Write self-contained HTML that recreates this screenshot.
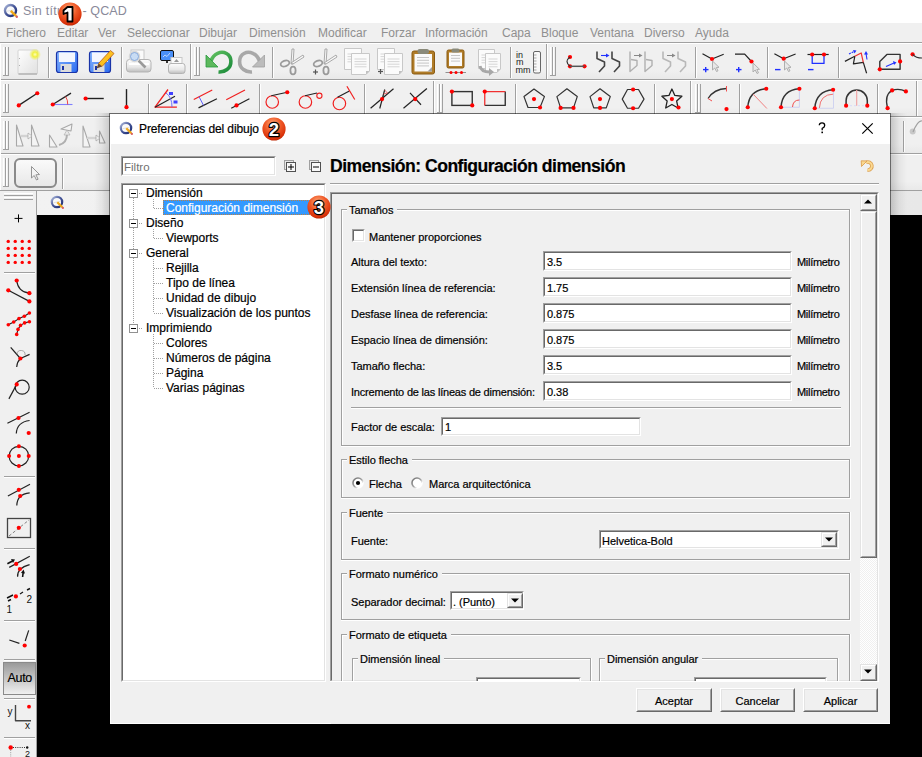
<!DOCTYPE html>
<html><head><meta charset="utf-8"><style>
html,body{margin:0;padding:0;width:922px;height:757px;overflow:hidden;background:#000;position:relative}
.t{position:absolute;white-space:nowrap;font-family:"Liberation Sans",sans-serif}
.d{letter-spacing:-0.03px}
.t{-webkit-text-stroke:0.2px currentColor}
</style></head><body>
<div style="position:absolute;left:0px;top:0px;width:922px;height:23px;background:#fff"></div>
<svg style="position:absolute;left:2.5px;top:3px" width="17" height="17" viewBox="0 0 17 17"><defs><linearGradient id="qg" x1="0" y1="0" x2="1" y2="1"><stop offset="0" stop-color="#b0bcdc"/><stop offset="0.45" stop-color="#4a5a9c"/><stop offset="1" stop-color="#1a2a70"/></linearGradient></defs><circle cx="7.5" cy="7.5" r="5.55" fill="#fafafa" stroke="url(#qg)" stroke-width="2.4"/><line x1="3.75" y1="8.25" x2="11.25" y2="6.75" stroke="#d0d0d0" stroke-width="0.6"/><line x1="7.800000000000001" y1="7.800000000000001" x2="13.2" y2="13.2" stroke="#f0a818" stroke-width="2.4"/><circle cx="13.8" cy="13.8" r="1.2" fill="#d86060"/></svg>
<div class="t" style="left:23px;top:5.42px;font-size:12.5px;line-height:12.5px;color:#8a8a9a;font-weight:normal;letter-spacing:0.3px;-webkit-text-stroke:0">Sin título</div>
<div class="t" style="left:82.5px;top:5.42px;font-size:12.5px;line-height:12.5px;color:#8a8a9a;font-weight:normal;letter-spacing:0.1px;-webkit-text-stroke:0">- QCAD</div>
<div style="position:absolute;left:0px;top:23px;width:922px;height:19px;background:#f0f0f0"></div>
<div style="position:absolute;left:0px;top:42px;width:922px;height:1px;background:#a0a0a0"></div>
<div style="position:absolute;left:0px;top:43px;width:922px;height:1px;background:#fff"></div>
<div class="t" style="left:6px;top:27.04px;font-size:12px;line-height:12px;color:#8f8f8f;font-weight:normal;width:42px;-webkit-text-stroke:0">Fichero</div>
<div class="t" style="left:57px;top:27.04px;font-size:12px;line-height:12px;color:#8f8f8f;font-weight:normal;width:34px;-webkit-text-stroke:0">Editar</div>
<div class="t" style="left:98px;top:27.04px;font-size:12px;line-height:12px;color:#8f8f8f;font-weight:normal;width:21px;-webkit-text-stroke:0">Ver</div>
<div class="t" style="left:127px;top:27.04px;font-size:12px;line-height:12px;color:#8f8f8f;font-weight:normal;width:64px;-webkit-text-stroke:0">Seleccionar</div>
<div class="t" style="left:199px;top:27.04px;font-size:12px;line-height:12px;color:#8f8f8f;font-weight:normal;width:42px;-webkit-text-stroke:0">Dibujar</div>
<div class="t" style="left:249px;top:27.04px;font-size:12px;line-height:12px;color:#8f8f8f;font-weight:normal;width:60px;-webkit-text-stroke:0">Dimensión</div>
<div class="t" style="left:318px;top:27.04px;font-size:12px;line-height:12px;color:#8f8f8f;font-weight:normal;width:55px;-webkit-text-stroke:0">Modificar</div>
<div class="t" style="left:381px;top:27.04px;font-size:12px;line-height:12px;color:#8f8f8f;font-weight:normal;width:36px;-webkit-text-stroke:0">Forzar</div>
<div class="t" style="left:425px;top:27.04px;font-size:12px;line-height:12px;color:#8f8f8f;font-weight:normal;width:68px;-webkit-text-stroke:0">Información</div>
<div class="t" style="left:502px;top:27.04px;font-size:12px;line-height:12px;color:#8f8f8f;font-weight:normal;width:31px;-webkit-text-stroke:0">Capa</div>
<div class="t" style="left:541px;top:27.04px;font-size:12px;line-height:12px;color:#8f8f8f;font-weight:normal;width:41px;-webkit-text-stroke:0">Bloque</div>
<div class="t" style="left:590px;top:27.04px;font-size:12px;line-height:12px;color:#8f8f8f;font-weight:normal;width:45px;-webkit-text-stroke:0">Ventana</div>
<div class="t" style="left:644px;top:27.04px;font-size:12px;line-height:12px;color:#8f8f8f;font-weight:normal;width:42px;-webkit-text-stroke:0">Diverso</div>
<div class="t" style="left:695px;top:27.04px;font-size:12px;line-height:12px;color:#8f8f8f;font-weight:normal;width:37px;-webkit-text-stroke:0">Ayuda</div>
<div style="position:absolute;left:0px;top:44px;width:922px;height:35px;background:linear-gradient(#f0f0f0 0%,#f0f0f0 75%,#e9e9e9 100%)"></div>
<div style="position:absolute;left:0px;top:79px;width:922px;height:1px;background:#a0a0a0"></div>
<div style="position:absolute;left:0px;top:80px;width:922px;height:1px;background:#fff"></div>
<div style="position:absolute;left:0px;top:81px;width:922px;height:35px;background:linear-gradient(#f0f0f0 0%,#f0f0f0 75%,#e9e9e9 100%)"></div>
<div style="position:absolute;left:0px;top:116px;width:922px;height:1px;background:#a0a0a0"></div>
<div style="position:absolute;left:0px;top:117px;width:922px;height:1px;background:#fff"></div>
<div style="position:absolute;left:0px;top:118px;width:922px;height:35px;background:linear-gradient(#f0f0f0 0%,#f0f0f0 75%,#e9e9e9 100%)"></div>
<div style="position:absolute;left:0px;top:153px;width:922px;height:1px;background:#a0a0a0"></div>
<div style="position:absolute;left:0px;top:154px;width:922px;height:1px;background:#fff"></div>
<div style="position:absolute;left:0px;top:155px;width:922px;height:35px;background:linear-gradient(#f0f0f0 0%,#f0f0f0 75%,#e9e9e9 100%)"></div>
<div style="position:absolute;left:0px;top:190px;width:922px;height:1px;background:#a0a0a0"></div>
<div style="position:absolute;left:0px;top:191px;width:922px;height:1px;background:#fff"></div>
<div style="position:absolute;left:0px;top:44px;width:1px;height:146px;background:#fff"></div>
<div style="position:absolute;left:3px;top:47px;width:2px;height:28px;border-left:1px solid #fff;border-right:1px solid #a0a0a0;width:1px;box-sizing:content-box"></div>
<div style="position:absolute;left:6px;top:47px;width:2px;height:28px;border-left:1px solid #fff;border-right:1px solid #a0a0a0;width:1px;box-sizing:content-box"></div>
<div style="position:absolute;left:3px;top:75px;width:6px;height:1px;background:#a0a0a0"></div>
<div style="position:absolute;left:48px;top:47px;width:1px;height:31px;background:#a0a0a0"></div>
<div style="position:absolute;left:49px;top:47px;width:1px;height:31px;background:#fff"></div>
<div style="position:absolute;left:121px;top:47px;width:1px;height:31px;background:#a0a0a0"></div>
<div style="position:absolute;left:122px;top:47px;width:1px;height:31px;background:#fff"></div>
<div style="position:absolute;left:190px;top:44px;width:1px;height:35px;background:#a0a0a0"></div>
<div style="position:absolute;left:191px;top:44px;width:1px;height:35px;background:#fff"></div>
<div style="position:absolute;left:194px;top:47px;width:2px;height:28px;border-left:1px solid #fff;border-right:1px solid #a0a0a0;width:1px;box-sizing:content-box"></div>
<div style="position:absolute;left:197px;top:47px;width:2px;height:28px;border-left:1px solid #fff;border-right:1px solid #a0a0a0;width:1px;box-sizing:content-box"></div>
<div style="position:absolute;left:194px;top:75px;width:6px;height:1px;background:#a0a0a0"></div>
<div style="position:absolute;left:272px;top:47px;width:1px;height:31px;background:#a0a0a0"></div>
<div style="position:absolute;left:273px;top:47px;width:1px;height:31px;background:#fff"></div>
<div style="position:absolute;left:510px;top:47px;width:1px;height:31px;background:#a0a0a0"></div>
<div style="position:absolute;left:511px;top:47px;width:1px;height:31px;background:#fff"></div>
<div style="position:absolute;left:546px;top:44px;width:1px;height:35px;background:#a0a0a0"></div>
<div style="position:absolute;left:547px;top:44px;width:1px;height:35px;background:#fff"></div>
<div style="position:absolute;left:550px;top:47px;width:2px;height:28px;border-left:1px solid #fff;border-right:1px solid #a0a0a0;width:1px;box-sizing:content-box"></div>
<div style="position:absolute;left:553px;top:47px;width:2px;height:28px;border-left:1px solid #fff;border-right:1px solid #a0a0a0;width:1px;box-sizing:content-box"></div>
<div style="position:absolute;left:550px;top:75px;width:6px;height:1px;background:#a0a0a0"></div>
<div style="position:absolute;left:695px;top:47px;width:1px;height:31px;background:#a0a0a0"></div>
<div style="position:absolute;left:696px;top:47px;width:1px;height:31px;background:#fff"></div>
<div style="position:absolute;left:767px;top:47px;width:1px;height:31px;background:#a0a0a0"></div>
<div style="position:absolute;left:768px;top:47px;width:1px;height:31px;background:#fff"></div>
<div style="position:absolute;left:838px;top:47px;width:1px;height:31px;background:#a0a0a0"></div>
<div style="position:absolute;left:839px;top:47px;width:1px;height:31px;background:#fff"></div>
<div style="position:absolute;left:3px;top:84px;width:2px;height:28px;border-left:1px solid #fff;border-right:1px solid #a0a0a0;width:1px;box-sizing:content-box"></div>
<div style="position:absolute;left:6px;top:84px;width:2px;height:28px;border-left:1px solid #fff;border-right:1px solid #a0a0a0;width:1px;box-sizing:content-box"></div>
<div style="position:absolute;left:3px;top:112px;width:6px;height:1px;background:#a0a0a0"></div>
<div style="position:absolute;left:148px;top:84px;width:1px;height:31px;background:#a0a0a0"></div>
<div style="position:absolute;left:149px;top:84px;width:1px;height:31px;background:#fff"></div>
<div style="position:absolute;left:186px;top:84px;width:1px;height:31px;background:#a0a0a0"></div>
<div style="position:absolute;left:187px;top:84px;width:1px;height:31px;background:#fff"></div>
<div style="position:absolute;left:259px;top:84px;width:1px;height:31px;background:#a0a0a0"></div>
<div style="position:absolute;left:260px;top:84px;width:1px;height:31px;background:#fff"></div>
<div style="position:absolute;left:364px;top:84px;width:1px;height:31px;background:#a0a0a0"></div>
<div style="position:absolute;left:365px;top:84px;width:1px;height:31px;background:#fff"></div>
<div style="position:absolute;left:433px;top:81px;width:1px;height:35px;background:#a0a0a0"></div>
<div style="position:absolute;left:434px;top:81px;width:1px;height:35px;background:#fff"></div>
<div style="position:absolute;left:437px;top:84px;width:2px;height:28px;border-left:1px solid #fff;border-right:1px solid #a0a0a0;width:1px;box-sizing:content-box"></div>
<div style="position:absolute;left:440px;top:84px;width:2px;height:28px;border-left:1px solid #fff;border-right:1px solid #a0a0a0;width:1px;box-sizing:content-box"></div>
<div style="position:absolute;left:437px;top:112px;width:6px;height:1px;background:#a0a0a0"></div>
<div style="position:absolute;left:515px;top:84px;width:1px;height:31px;background:#a0a0a0"></div>
<div style="position:absolute;left:516px;top:84px;width:1px;height:31px;background:#fff"></div>
<div style="position:absolute;left:654px;top:84px;width:1px;height:31px;background:#a0a0a0"></div>
<div style="position:absolute;left:655px;top:84px;width:1px;height:31px;background:#fff"></div>
<div style="position:absolute;left:690px;top:81px;width:1px;height:35px;background:#a0a0a0"></div>
<div style="position:absolute;left:691px;top:81px;width:1px;height:35px;background:#fff"></div>
<div style="position:absolute;left:695px;top:84px;width:2px;height:28px;border-left:1px solid #fff;border-right:1px solid #a0a0a0;width:1px;box-sizing:content-box"></div>
<div style="position:absolute;left:698px;top:84px;width:2px;height:28px;border-left:1px solid #fff;border-right:1px solid #a0a0a0;width:1px;box-sizing:content-box"></div>
<div style="position:absolute;left:695px;top:112px;width:6px;height:1px;background:#a0a0a0"></div>
<div style="position:absolute;left:739px;top:84px;width:1px;height:31px;background:#a0a0a0"></div>
<div style="position:absolute;left:740px;top:84px;width:1px;height:31px;background:#fff"></div>
<div style="position:absolute;left:877px;top:84px;width:1px;height:31px;background:#a0a0a0"></div>
<div style="position:absolute;left:878px;top:84px;width:1px;height:31px;background:#fff"></div>
<div style="position:absolute;left:916px;top:81px;width:1px;height:35px;background:#a0a0a0"></div>
<div style="position:absolute;left:917px;top:81px;width:1px;height:35px;background:#fff"></div>
<div style="position:absolute;left:3px;top:121px;width:2px;height:28px;border-left:1px solid #fff;border-right:1px solid #a0a0a0;width:1px;box-sizing:content-box"></div>
<div style="position:absolute;left:6px;top:121px;width:2px;height:28px;border-left:1px solid #fff;border-right:1px solid #a0a0a0;width:1px;box-sizing:content-box"></div>
<div style="position:absolute;left:3px;top:149px;width:6px;height:1px;background:#a0a0a0"></div>
<div style="position:absolute;left:903px;top:121px;width:1px;height:31px;background:#a0a0a0"></div>
<div style="position:absolute;left:904px;top:121px;width:1px;height:31px;background:#fff"></div>
<div style="position:absolute;left:3px;top:158px;width:2px;height:28px;border-left:1px solid #fff;border-right:1px solid #a0a0a0;width:1px;box-sizing:content-box"></div>
<div style="position:absolute;left:6px;top:158px;width:2px;height:28px;border-left:1px solid #fff;border-right:1px solid #a0a0a0;width:1px;box-sizing:content-box"></div>
<div style="position:absolute;left:3px;top:186px;width:6px;height:1px;background:#a0a0a0"></div>
<div style="position:absolute;left:14px;top:158px;width:43px;height:30px;border:2px solid #8a8a8a;border-radius:6px;box-sizing:border-box;background:linear-gradient(#fafafa,#e8e8e8)"></div>
<div style="position:absolute;left:62px;top:158px;width:1px;height:31px;background:#a0a0a0"></div>
<div style="position:absolute;left:63px;top:158px;width:1px;height:31px;background:#fff"></div>
<div style="position:absolute;left:0px;top:191px;width:37px;height:566px;background:#f0f0f0"></div>
<div style="position:absolute;left:36px;top:191px;width:1px;height:566px;background:#a0a0a0"></div>
<div style="position:absolute;left:4px;top:193px;width:29px;height:1px;border-top:1px solid #fff;border-bottom:1px solid #a0a0a0;height:1px;box-sizing:content-box"></div>
<div style="position:absolute;left:4px;top:197px;width:29px;height:1px;border-top:1px solid #fff;border-bottom:1px solid #a0a0a0;height:1px;box-sizing:content-box"></div>
<div style="position:absolute;left:4px;top:272px;width:31px;height:1px;background:#a0a0a0"></div>
<div style="position:absolute;left:4px;top:273px;width:31px;height:1px;background:#fff"></div>
<div style="position:absolute;left:4px;top:476px;width:31px;height:1px;background:#a0a0a0"></div>
<div style="position:absolute;left:4px;top:477px;width:31px;height:1px;background:#fff"></div>
<div style="position:absolute;left:4px;top:548px;width:31px;height:1px;background:#a0a0a0"></div>
<div style="position:absolute;left:4px;top:549px;width:31px;height:1px;background:#fff"></div>
<div style="position:absolute;left:4px;top:620px;width:31px;height:1px;background:#a0a0a0"></div>
<div style="position:absolute;left:4px;top:621px;width:31px;height:1px;background:#fff"></div>
<div style="position:absolute;left:4px;top:659px;width:31px;height:1px;background:#a0a0a0"></div>
<div style="position:absolute;left:4px;top:660px;width:31px;height:1px;background:#fff"></div>
<div style="position:absolute;left:4px;top:698px;width:31px;height:1px;background:#a0a0a0"></div>
<div style="position:absolute;left:4px;top:699px;width:31px;height:1px;background:#fff"></div>
<div style="position:absolute;left:4px;top:737px;width:31px;height:1px;background:#a0a0a0"></div>
<div style="position:absolute;left:4px;top:738px;width:31px;height:1px;background:#fff"></div>
<svg style="position:absolute;left:0;top:0" width="922" height="757" viewBox="0 0 922 757"><defs><linearGradient id="pg" x1="0" y1="0" x2="1" y2="1"><stop offset="0" stop-color="#fff"/><stop offset="1" stop-color="#e0e0e0"/></linearGradient><radialGradient id="glow"><stop offset="0" stop-color="#ffffc0"/><stop offset="0.4" stop-color="#f0f040"/><stop offset="1" stop-color="#f0f040" stop-opacity="0"/></radialGradient><linearGradient id="flop" x1="0" y1="0" x2="1" y2="1"><stop offset="0" stop-color="#8ab8ff"/><stop offset="1" stop-color="#2a6af0"/></linearGradient><linearGradient id="prn" x1="0" y1="0" x2="0" y2="1"><stop offset="0" stop-color="#fdfdfd"/><stop offset="0.6" stop-color="#e8e8e8"/><stop offset="1" stop-color="#bcbcbc"/></linearGradient><linearGradient id="grn" x1="0" y1="0" x2="1" y2="1"><stop offset="0" stop-color="#60c060"/><stop offset="1" stop-color="#1a8a3a"/></linearGradient></defs><rect x="18" y="50" width="19.5" height="24" fill="url(#pg)" stroke="#d4d4d4" stroke-width="1" rx="1"/><line x1="18.5" y1="74" x2="37" y2="74" stroke="#a8a8a8" stroke-width="1.2" /><circle cx="19.5" cy="58.5" r="0.5" fill="#999"/><circle cx="19.5" cy="65.5" r="0.5" fill="#999"/><circle cx="35" cy="54.5" r="6" fill="url(#glow)"/><rect x="56.5" y="51.5" width="21" height="21" rx="2.5" fill="url(#flop)" stroke="#1a34a8" stroke-width="1.2"/><rect x="59" y="52.5" width="16" height="9.5" fill="#f4f6fe"/><rect x="60.5" y="64" width="11" height="8" fill="#dcdcdc"/><rect x="62" y="66" width="2" height="4" fill="#1a34a8"/><rect x="89.5" y="51.5" width="21" height="21" rx="2.5" fill="url(#flop)" stroke="#1a34a8" stroke-width="1.2"/><rect x="92" y="52.5" width="16" height="9.5" fill="#f4f6fe"/><rect x="93.5" y="64" width="11" height="8" fill="#dcdcdc"/><rect x="95" y="66" width="2" height="4" fill="#1a34a8"/><path d="M98.5 63.5 L110.5 50.5 L114 53.5 L102 66.5 Z" fill="#fcc020" stroke="#b85a10" stroke-width="0.8" /><path d="M98.5 63.5 L102 66.5 L96.5 68.5 Z" fill="#6a4a30"/><rect x="131" y="50" width="13" height="10" fill="#fafafa" stroke="#c8c8c8"/><rect x="126.5" y="59.5" width="24.5" height="12.5" rx="3" fill="url(#prn)" stroke="#b4b4b4"/><rect x="129" y="63" width="20" height="2" fill="#fff"/><line x1="138.5" y1="60.5" x2="145.5" y2="67.5" stroke="#9a9a9a" stroke-width="2.6" /><circle cx="134.5" cy="56.5" r="5" fill="#c8dcf4" stroke="#d8d8d8" stroke-width="1.6"/><circle cx="134.5" cy="56.5" r="4" fill="none" stroke="#7aa0d8" stroke-width="0.8"/><rect x="160.5" y="50.5" width="13" height="10" rx="1.5" fill="#4a90f8" stroke="#111"/><polyline points="163,57 165,55 167,56.5 170,53" fill="none" stroke="#e8f0ff" stroke-width="0.7" stroke-linejoin="round" /><line x1="167" y1="61" x2="167" y2="63" stroke="#333" stroke-width="2" /><rect x="171" y="57.5" width="11" height="8" fill="#fafafa" stroke="#c8c8c8"/><rect x="168.5" y="63.5" width="16.5" height="10" rx="2.5" fill="url(#prn)" stroke="#b4b4b4"/><path d="M176.5 59 L179 62 L174 62Z" fill="#999"/><path d="M211 61 C213.5 53.5 221 50.5 226.5 53.5 C232 56.5 232.5 65.5 227 69.5 C224.5 71.5 221 72.2 218.5 72" fill="none" stroke="url(#grn)" stroke-width="3.6" /><path d="M206 55 L206 67 L218 67 Z" fill="#5cb85c" stroke="#2a9a40" stroke-width="0.8"/><path d="M259.5 61 C257 53.5 249.5 50.5 244 53.5 C238.5 56.5 238 65.5 243.5 69.5 C246 71.5 249.5 72.2 252 72" fill="none" stroke="#a8a8a8" stroke-width="3.6" /><path d="M264.5 55 L264.5 67 L252.5 67 Z" fill="#bcbcbc" stroke="#a0a0a0" stroke-width="0.8"/><path d="M291 64 L292 49 L294 49 L293 64Z" fill="#f8f8f8" stroke="#a0a0a0" stroke-width="0.9"/><path d="M291 63 L303 55 L304 57 L293 64Z" fill="#f8f8f8" stroke="#a0a0a0" stroke-width="0.9"/><ellipse cx="285" cy="63.5" rx="4.5" ry="2.8" fill="none" stroke="#9a9a9a" stroke-width="1.8" transform="rotate(-20 285 63.5)"/><ellipse cx="293" cy="70.5" rx="2.6" ry="3.8" fill="none" stroke="#9a9a9a" stroke-width="1.8"/><path d="M324 64 L325 49 L327 49 L326 64Z" fill="#f8f8f8" stroke="#a0a0a0" stroke-width="0.9"/><path d="M324 63 L336 55 L337 57 L326 64Z" fill="#f8f8f8" stroke="#a0a0a0" stroke-width="0.9"/><ellipse cx="318" cy="63.5" rx="4.5" ry="2.8" fill="none" stroke="#9a9a9a" stroke-width="1.8" transform="rotate(-20 318 63.5)"/><ellipse cx="326" cy="70.5" rx="2.6" ry="3.8" fill="none" stroke="#9a9a9a" stroke-width="1.8"/><line x1="313" y1="72" x2="318" y2="72" stroke="#555" stroke-width="1.2" /><line x1="315.5" y1="69.5" x2="315.5" y2="74.5" stroke="#555" stroke-width="1.2" /><path d="M344.5 48.5 H361.5 V66 L358 69.5 H344.5Z" fill="#fbfbfb" stroke="#c8c8c8"/><path d="M361.5 66 L358 66 L358 69.5Z" fill="#c0c0c0"/><line x1="347.5" y1="54.0" x2="358.5" y2="54.0" stroke="#d0d0d0" stroke-width="0.9" /><line x1="347.5" y1="56.6" x2="358.5" y2="56.6" stroke="#d0d0d0" stroke-width="0.9" /><line x1="347.5" y1="59.2" x2="358.5" y2="59.2" stroke="#d0d0d0" stroke-width="0.9" /><line x1="347.5" y1="61.8" x2="358.5" y2="61.8" stroke="#d0d0d0" stroke-width="0.9" /><path d="M351.5 53.5 H369.5 V71 L366 74.5 H351.5Z" fill="#fbfbfb" stroke="#c8c8c8"/><path d="M369.5 71 L366 71 L366 74.5Z" fill="#c0c0c0"/><line x1="354.5" y1="59.0" x2="366.5" y2="59.0" stroke="#d0d0d0" stroke-width="0.9" /><line x1="354.5" y1="61.6" x2="366.5" y2="61.6" stroke="#d0d0d0" stroke-width="0.9" /><line x1="354.5" y1="64.2" x2="366.5" y2="64.2" stroke="#d0d0d0" stroke-width="0.9" /><line x1="354.5" y1="66.8" x2="366.5" y2="66.8" stroke="#d0d0d0" stroke-width="0.9" /><path d="M377.5 48.5 H394.5 V66 L391 69.5 H377.5Z" fill="#fbfbfb" stroke="#c8c8c8"/><path d="M394.5 66 L391 66 L391 69.5Z" fill="#c0c0c0"/><line x1="380.5" y1="54.0" x2="391.5" y2="54.0" stroke="#d0d0d0" stroke-width="0.9" /><line x1="380.5" y1="56.6" x2="391.5" y2="56.6" stroke="#d0d0d0" stroke-width="0.9" /><line x1="380.5" y1="59.2" x2="391.5" y2="59.2" stroke="#d0d0d0" stroke-width="0.9" /><line x1="380.5" y1="61.8" x2="391.5" y2="61.8" stroke="#d0d0d0" stroke-width="0.9" /><path d="M384.5 53.5 H402.5 V71 L399 74.5 H384.5Z" fill="#fbfbfb" stroke="#c8c8c8"/><path d="M402.5 71 L399 71 L399 74.5Z" fill="#c0c0c0"/><line x1="387.5" y1="59.0" x2="399.5" y2="59.0" stroke="#d0d0d0" stroke-width="0.9" /><line x1="387.5" y1="61.6" x2="399.5" y2="61.6" stroke="#d0d0d0" stroke-width="0.9" /><line x1="387.5" y1="64.2" x2="399.5" y2="64.2" stroke="#d0d0d0" stroke-width="0.9" /><line x1="387.5" y1="66.8" x2="399.5" y2="66.8" stroke="#d0d0d0" stroke-width="0.9" /><line x1="378" y1="71.5" x2="383" y2="71.5" stroke="#555" stroke-width="1.2" /><line x1="380.5" y1="69" x2="380.5" y2="74" stroke="#555" stroke-width="1.2" /><rect x="412" y="51" width="22.5" height="23" rx="2" fill="#b07c28" stroke="#8a5a10"/><rect x="414.5" y="54" width="17.5" height="17.5" fill="#fafafa"/><line x1="417" y1="57.5" x2="429" y2="57.5" stroke="#c0c0c0" stroke-width="0.9" /><line x1="417" y1="60.3" x2="429" y2="60.3" stroke="#c0c0c0" stroke-width="0.9" /><line x1="417" y1="63.1" x2="429" y2="63.1" stroke="#c0c0c0" stroke-width="0.9" /><line x1="417" y1="65.9" x2="429" y2="65.9" stroke="#c0c0c0" stroke-width="0.9" /><path d="M432 67 L432 71.5 L427.5 71.5Z" fill="#a0a0a0"/><rect x="417.5" y="49" width="11.5" height="5" rx="2" fill="#8a8a7a"/><rect x="447" y="50" width="17" height="18" rx="1.5" fill="#b07c28" stroke="#8a5a10"/><rect x="449" y="52.5" width="13" height="13.5" fill="#fafafa"/><line x1="451" y1="55.5" x2="460" y2="55.5" stroke="#c0c0c0" stroke-width="0.9" /><line x1="451" y1="58.3" x2="460" y2="58.3" stroke="#c0c0c0" stroke-width="0.9" /><line x1="451" y1="61.1" x2="460" y2="61.1" stroke="#c0c0c0" stroke-width="0.9" /><rect x="451.5" y="48.5" width="8" height="4" rx="1.5" fill="#8a8a7a"/><line x1="445.5" y1="72.5" x2="466" y2="72.5" stroke="#777" stroke-width="0.8" /><circle cx="451" cy="72.5" r="1.5" fill="#f00"/><circle cx="456" cy="72.5" r="1.5" fill="#f00"/><circle cx="461.5" cy="72.5" r="1.5" fill="#f00"/><path d="M478.5 49.5 H494.5 V65 L491 68.5 H478.5Z" fill="#fbfbfb" stroke="#c8c8c8"/><path d="M494.5 65 L491 65 L491 68.5Z" fill="#c0c0c0"/><line x1="481.5" y1="55.0" x2="491.5" y2="55.0" stroke="#d0d0d0" stroke-width="0.9" /><line x1="481.5" y1="57.6" x2="491.5" y2="57.6" stroke="#d0d0d0" stroke-width="0.9" /><line x1="481.5" y1="60.2" x2="491.5" y2="60.2" stroke="#d0d0d0" stroke-width="0.9" /><line x1="481.5" y1="62.8" x2="491.5" y2="62.8" stroke="#d0d0d0" stroke-width="0.9" /><path d="M485.5 53.5 H500.5 V69 L497 72.5 H485.5Z" fill="#fbfbfb" stroke="#c8c8c8"/><path d="M500.5 69 L497 69 L497 72.5Z" fill="#c0c0c0"/><line x1="488.5" y1="59.0" x2="497.5" y2="59.0" stroke="#d0d0d0" stroke-width="0.9" /><line x1="488.5" y1="61.6" x2="497.5" y2="61.6" stroke="#d0d0d0" stroke-width="0.9" /><line x1="488.5" y1="64.2" x2="497.5" y2="64.2" stroke="#d0d0d0" stroke-width="0.9" /><line x1="488.5" y1="66.8" x2="497.5" y2="66.8" stroke="#d0d0d0" stroke-width="0.9" /><path d="M480 66 Q481 72 490 72" fill="none" stroke="#a8a8a8" stroke-width="3" /><path d="M489 68 L494 72 L489 76Z" fill="#a8a8a8"/><g style="-webkit-text-stroke:0.35px #222"><text x="516" y="57.5" font-family="Liberation Sans" font-size="9" fill="#222" font-weight="normal" text-anchor="start">in</text><text x="516" y="65.3" font-family="Liberation Sans" font-size="9" fill="#222" font-weight="normal" text-anchor="start">m</text><text x="515.5" y="73.3" font-family="Liberation Sans" font-size="9" fill="#222" font-weight="normal" text-anchor="start">mm</text></g><rect x="533.5" y="51.5" width="7" height="21.5" rx="1.5" fill="#f8f8f8" stroke="#666"/><line x1="534" y1="55" x2="536.5" y2="55" stroke="#888" stroke-width="0.7" /><line x1="534" y1="58" x2="536.5" y2="58" stroke="#888" stroke-width="0.7" /><line x1="534" y1="61" x2="536.5" y2="61" stroke="#888" stroke-width="0.7" /><line x1="534" y1="64" x2="536.5" y2="64" stroke="#888" stroke-width="0.7" /><line x1="534" y1="67" x2="536.5" y2="67" stroke="#888" stroke-width="0.7" /><line x1="534" y1="70" x2="536.5" y2="70" stroke="#888" stroke-width="0.7" /><circle cx="570" cy="57" r="2.1" fill="#f00"/><circle cx="570" cy="66.3" r="2.1" fill="#f00"/><circle cx="584.5" cy="66.3" r="2.1" fill="#f00"/><line x1="570" y1="66.3" x2="584.5" y2="66.3" stroke="#555" stroke-width="1.5" /><path d="M570 57 Q564 61.5 570 66.3" fill="none" stroke="#333" stroke-width="1.2" /><polyline points="597,51.5 597,58.5 604.5,62.0 604.5,66.0 599,72.0" fill="none" stroke="#444" stroke-width="1.6" stroke-linejoin="round" /><polyline points="612,51.5 612,58.5 619.5,62.0 619.5,66.0 614,72.0" fill="none" stroke="#444" stroke-width="1.6" stroke-linejoin="round" /><line x1="601" y1="55.5" x2="607" y2="55.5" stroke="#2030ff" stroke-width="1.1" /><path d="M606 53.5 L609.5 55.5 L606 57.5Z" fill="#2030ff"/><polyline points="630,51.5 630,71.5 637,65.5 637,60.5 631,59.5" fill="none" stroke="#b0b0b0" stroke-width="1.4" stroke-linejoin="round" /><polyline points="645,51.5 645,71.5 652,65.5 652,60.5 646,59.5" fill="none" stroke="#b0b0b0" stroke-width="1.4" stroke-linejoin="round" /><line x1="634" y1="55.5" x2="640" y2="55.5" stroke="#888" stroke-width="1" /><path d="M639 53.5 L642.5 55.5 L639 57.5Z" fill="#888"/><polyline points="663,51.5 663,58.5 670.5,62.0 670.5,66.0 665,72.0" fill="none" stroke="#b8b8b8" stroke-width="1.6" stroke-linejoin="round" /><polyline points="678,51.5 678,58.5 685.5,62.0 685.5,66.0 680,72.0" fill="none" stroke="#b8b8b8" stroke-width="1.6" stroke-linejoin="round" /><line x1="667" y1="55.5" x2="673" y2="55.5" stroke="#888" stroke-width="1" /><path d="M672 53.5 L675.5 55.5 L672 57.5Z" fill="#888"/><polyline points="702.5,53.7 712,59 723.7,54.2" fill="none" stroke="#222" stroke-width="1.2" stroke-linejoin="round" /><circle cx="712" cy="59" r="2.1" fill="#f00"/><path d="M712.5 61 L712.5 70 L714.7 68 L716.5 71.5 L718.0 70.8 L716.3 67.5 L719.0 67.3Z" fill="#e8e8e8" stroke="#a8a8a8" stroke-width="0.9"/><line x1="703" y1="69.6" x2="708.5" y2="69.6" stroke="#2030ff" stroke-width="1.4" /><line x1="705.7" y1="67" x2="705.7" y2="72.3" stroke="#2030ff" stroke-width="1.4" /><polyline points="735,54.2 744.7,54.2 751.5,61.5" fill="none" stroke="#222" stroke-width="1.2" stroke-linejoin="round" /><circle cx="751.5" cy="61.5" r="2.1" fill="#f00"/><path d="M753 63 L753 72 L755.2 70 L757 73.5 L758.5 72.8 L756.8 69.5 L759.5 69.3Z" fill="#e8e8e8" stroke="#a8a8a8" stroke-width="0.9"/><line x1="736" y1="69.6" x2="741.5" y2="69.6" stroke="#2030ff" stroke-width="1.4" /><line x1="738.7" y1="67" x2="738.7" y2="72.3" stroke="#2030ff" stroke-width="1.4" /><polyline points="774.4,53.7 783.7,58.7 795.6,54" fill="none" stroke="#222" stroke-width="1.2" stroke-linejoin="round" /><circle cx="783.7" cy="58.7" r="2.1" fill="#f00"/><path d="M784.5 61 L784.5 70 L786.7 68 L788.5 71.5 L790.0 70.8 L788.3 67.5 L791.0 67.3Z" fill="#e8e8e8" stroke="#a8a8a8" stroke-width="0.9"/><line x1="775" y1="69.6" x2="780.5" y2="69.6" stroke="#2030ff" stroke-width="1.4" /><line x1="807.5" y1="54.5" x2="828.7" y2="54.5" stroke="#222" stroke-width="1.2" /><polyline points="812.2,54.5 812.2,63.4 824,63.4 824,54.5" fill="none" stroke="#2030ff" stroke-width="1.3" stroke-linejoin="round" /><circle cx="812.2" cy="54.5" r="2.1" fill="#f00"/><circle cx="824" cy="54.5" r="2.1" fill="#f00"/><line x1="808" y1="69.6" x2="813.5" y2="69.6" stroke="#2030ff" stroke-width="1.4" /><line x1="844.9" y1="61.4" x2="854.8" y2="56.3" stroke="#222" stroke-width="1.2" /><polyline points="854.8,56.3 853.4,63.8 863.3,62.4 866.6,73.2" fill="none" stroke="#222" stroke-width="1.2" stroke-linejoin="round" /><polyline points="854.8,56.3 861.2,53 863.3,62.4" fill="none" stroke="#f03030" stroke-width="1.2" stroke-linejoin="round" /><line x1="849" y1="54" x2="854" y2="51.5" stroke="#2030ff" stroke-width="1.1" stroke-dasharray="2 1"/><path d="M853 50 L856.5 50.5 L854.5 53.5Z" fill="#2030ff"/><line x1="867" y1="59.5" x2="866" y2="53.5" stroke="#2030ff" stroke-width="1.1" /><path d="M864 54.5 L866 51 L868 54.5Z" fill="#2030ff"/><polygon points="879.8,69.3 879.8,61.4 886.9,54.4 900.1,54.4 900.1,69.3" fill="none" stroke="#333" stroke-width="1.4" stroke-linejoin="round" /><circle cx="879.8" cy="69.3" r="2.1" fill="#f00"/><circle cx="900.1" cy="61.4" r="2.1" fill="#f00"/><line x1="886" y1="66.5" x2="894" y2="63" stroke="#2030ff" stroke-width="1.1" /><path d="M893 61 L896.5 62.5 L894 65Z" fill="#2030ff"/><circle cx="912.6" cy="54.3" r="2.1" fill="#f00"/><path d="M912.6 54.3 Q916 58 922 58" fill="none" stroke="#333" stroke-width="1.2" /><line x1="18.75" y1="105.4" x2="37.25" y2="93.25" stroke="#222" stroke-width="1.3" /><circle cx="18.75" cy="105.4" r="2.1" fill="#f00"/><circle cx="37.25" cy="93.25" r="2.1" fill="#f00"/><line x1="52.75" y1="104.5" x2="71" y2="93.1" stroke="#222" stroke-width="1.3" /><line x1="52.75" y1="104.5" x2="72.5" y2="104.5" stroke="#8080ff" stroke-width="1.1" /><path d="M65.6 96.6 Q68 100 67.7 104.5" fill="none" stroke="#f03030" stroke-width="0.9" /><circle cx="52.75" cy="104.5" r="2.1" fill="#f00"/><line x1="85.6" y1="98.5" x2="103.75" y2="98.5" stroke="#222" stroke-width="1.4" /><circle cx="85.6" cy="98.5" r="2.1" fill="#f00"/><line x1="126.5" y1="89.1" x2="126.5" y2="107.2" stroke="#222" stroke-width="1.4" /><circle cx="126.5" cy="107.2" r="2.1" fill="#f00"/><polyline points="168,89.5 155,107.2 176.9,107.2" fill="none" stroke="#f02020" stroke-width="1.3" stroke-linejoin="round" /><line x1="155" y1="107.2" x2="175" y2="96.25" stroke="#222" stroke-width="1.2" /><path d="M166 93 Q172 97 172 107" fill="none" stroke="#6060ff" stroke-width="0.9" /><rect x="169" y="92" width="4" height="3" fill="#4040ff"/><rect x="173.5" y="100.5" width="4" height="3" fill="#4040ff"/><line x1="193.75" y1="99.5" x2="212.25" y2="90" stroke="#f02020" stroke-width="1.2" /><line x1="198.5" y1="107.9" x2="216.9" y2="98.75" stroke="#222" stroke-width="1.2" /><line x1="199" y1="96.6" x2="203.5" y2="105.4" stroke="#6060ff" stroke-width="1" /><line x1="226.25" y1="99.75" x2="245" y2="90" stroke="#f02020" stroke-width="1.2" /><line x1="231.25" y1="108.25" x2="249.4" y2="98.75" stroke="#222" stroke-width="1.2" /><circle cx="236.5" cy="105.4" r="2.1" fill="#f00"/><circle cx="272.25" cy="102" r="6.25" fill="none" stroke="#f02020" stroke-width="1.2"/><line x1="271.25" y1="95.75" x2="287.25" y2="92.25" stroke="#222" stroke-width="1.2" /><circle cx="287.25" cy="92.25" r="2.1" fill="#f00"/><circle cx="305.4" cy="102" r="6.25" fill="none" stroke="#f02020" stroke-width="1.2"/><circle cx="319.4" cy="95.75" r="2.6" fill="none" stroke="#f02020" stroke-width="1.1"/><line x1="305" y1="95.75" x2="317" y2="93" stroke="#222" stroke-width="1.2" /><circle cx="339.4" cy="103.5" r="6.25" fill="none" stroke="#f02020" stroke-width="1.2"/><line x1="337.5" y1="97.25" x2="349.4" y2="91" stroke="#222" stroke-width="1.2" /><line x1="346.9" y1="86.25" x2="354.75" y2="99.5" stroke="#f02020" stroke-width="1.2" /><line x1="370.6" y1="108.25" x2="393.5" y2="88.75" stroke="#222" stroke-width="1.2" /><line x1="379.75" y1="108.5" x2="384.75" y2="89.5" stroke="#222" stroke-width="1.2" /><polyline points="384.5,90 387.5,93 383.5,94" fill="none" stroke="#f05050" stroke-width="0.8" stroke-linejoin="round" /><circle cx="382.1" cy="99.1" r="2.1" fill="#f00"/><line x1="403.5" y1="108.25" x2="426.9" y2="88.5" stroke="#222" stroke-width="1.2" /><line x1="410" y1="92.9" x2="421" y2="104.75" stroke="#222" stroke-width="1.2" /><circle cx="415.25" cy="99.1" r="2.1" fill="#f00"/><rect x="451.9" y="91.6" width="20.35" height="13.8" fill="none" stroke="#333" stroke-width="1.4"/><circle cx="451.9" cy="91.6" r="2.1" fill="#f00"/><circle cx="472.25" cy="105.4" r="2.1" fill="#f00"/><polyline points="484.75,105.4 505.25,105.4 505.25,91.6" fill="none" stroke="#333" stroke-width="1.4" stroke-linejoin="round" /><polyline points="484.75,105.4 484.75,91.6 505.25,91.6" fill="none" stroke="#f03030" stroke-width="1.3" stroke-linejoin="round" /><circle cx="484.75" cy="91.6" r="2.1" fill="#f00"/><polygon points="534,89.1 544.4,96.6 540,107.5 528,107.5 524,96.6" fill="none" stroke="#333" stroke-width="1.2" stroke-linejoin="round" /><circle cx="534" cy="99.1" r="2.1" fill="#f00"/><circle cx="540" cy="107.5" r="2.1" fill="#f00"/><polygon points="566.9,88.75 577.25,96.6 573.5,107.9 560.6,107.9 556.9,96.6" fill="none" stroke="#333" stroke-width="1.2" stroke-linejoin="round" /><circle cx="560.6" cy="107.9" r="2.1" fill="#f00"/><circle cx="573.5" cy="107.9" r="2.1" fill="#f00"/><polygon points="600,88.75 610.25,96.6 606.25,107.9 593.75,107.9 590,96.6" fill="none" stroke="#333" stroke-width="1.2" stroke-linejoin="round" /><circle cx="600" cy="99.1" r="2.1" fill="#f00"/><circle cx="600" cy="107.9" r="2.1" fill="#f00"/><polygon points="627.5,89.5 638.5,89.5 644,99.1 638.5,108.25 627.5,108.25 622.25,99.1" fill="none" stroke="#333" stroke-width="1.2" stroke-linejoin="round" /><circle cx="633.1" cy="89.5" r="2.1" fill="#f00"/><circle cx="633.1" cy="108.25" r="2.1" fill="#f00"/><polygon points="671.9,89.0 674.84,95.45 681.89,96.26 676.66,101.05 678.07,107.99 671.9,104.5 665.73,107.99 667.14,101.05 661.91,96.26 668.96,95.45" fill="none" stroke="#222" stroke-width="1.3" stroke-linejoin="round" /><circle cx="671.9" cy="99.1" r="2.1" fill="#f00"/><circle cx="678.5" cy="107.5" r="2.1" fill="#f00"/><path d="M708 98.5 Q714 89 726.5 88.5" fill="none" stroke="#333" stroke-width="1.3" /><line x1="708" y1="98.5" x2="712" y2="101" stroke="#f05050" stroke-width="1" /><line x1="726.5" y1="86" x2="726.5" y2="91.5" stroke="#f05050" stroke-width="1" /><circle cx="726.5" cy="109.1" r="2.1" fill="#f00"/><path d="M747.75 107.25 Q749 90 766.25 88.75" fill="none" stroke="#333" stroke-width="1.5" /><line x1="753.1" y1="94.1" x2="766.9" y2="108.5" stroke="#f08080" stroke-width="1" /><circle cx="747.75" cy="107.25" r="2.1" fill="#f00"/><circle cx="766.25" cy="88.75" r="2.1" fill="#f00"/><path d="M781 107.25 Q782 90 799.4 88.75" fill="none" stroke="#333" stroke-width="1.5" /><polyline points="781,107.25 799.4,107.25 799.4,90" fill="none" stroke="#c8ccf0" stroke-width="0.9" stroke-linejoin="round" /><path d="M792.5 107 Q793 100 799.4 100" fill="none" stroke="#f05050" stroke-width="1" /><circle cx="781" cy="107.25" r="2.1" fill="#f00"/><circle cx="799.4" cy="88.75" r="2.1" fill="#f00"/><path d="M814.75 108.25 Q816 91 833.1 89.75" fill="none" stroke="#333" stroke-width="1.5" /><path d="M819.4 108 Q820 94.5 833.5 94.1" fill="none" stroke="#f07070" stroke-width="1" /><polyline points="814.75,108.25 833.5,108.25 833.5,91" fill="none" stroke="#c8ccf0" stroke-width="0.8" stroke-linejoin="round" /><circle cx="814.75" cy="108.25" r="2.1" fill="#f00"/><circle cx="833.1" cy="89.75" r="2.1" fill="#f00"/><path d="M846.1 105.7 L846.1 100.6 A10.6 10.6 0 0 1 867.3 100.6 L867.3 105.7" fill="none" stroke="#333" stroke-width="1.5" /><line x1="856.7" y1="90" x2="856.7" y2="105.7" stroke="#f0a0a0" stroke-width="1.1" /><line x1="846" y1="105.7" x2="867" y2="105.7" stroke="#d0d4f8" stroke-width="0.8" stroke-dasharray="2 2"/><circle cx="846.1" cy="105.7" r="2.1" fill="#f00"/><circle cx="867.3" cy="105.7" r="2.1" fill="#f00"/><path d="M887.6 108.2 Q884 95 892.1 90.4 Q899 88 905.9 91.4" fill="none" stroke="#333" stroke-width="1.3" /><circle cx="892.1" cy="90.4" r="2.1" fill="#f00"/><circle cx="905.9" cy="91.4" r="2.1" fill="#f00"/><circle cx="887.6" cy="108.2" r="2.1" fill="#f00"/><polygon points="16.5,125 23,146 16.5,146" fill="#f4f4f4" stroke="#a8a8a8" stroke-width="1.1" stroke-linejoin="round" /><polygon points="31.5,125 39,146 31.5,146" fill="#f4f4f4" stroke="#a8a8a8" stroke-width="1.1" stroke-linejoin="round" /><line x1="21" y1="136" x2="29" y2="136" stroke="#b8b8b8" stroke-width="2.2" /><line x1="21" y1="136" x2="29" y2="136" stroke="#f4f4f4" stroke-width="0.9" /><path d="M28 133 L32 136 L28 139Z" fill="#f4f4f4" stroke="#a8a8a8" stroke-width="0.7"/><polygon points="49.5,135 57,147 49.5,147" fill="#f4f4f4" stroke="#a8a8a8" stroke-width="1.1" stroke-linejoin="round" /><polygon points="61,129 72,124 71,131" fill="#f4f4f4" stroke="#a8a8a8" stroke-width="1.1" stroke-linejoin="round" /><path d="M59 145 Q67 143 67 134" fill="none" stroke="#b0b0b0" stroke-width="2" /><path d="M64 135 L67 130 L70 135Z" fill="#e8e8e8" stroke="#a8a8a8" stroke-width="0.6"/><polygon points="83,126 90,147 83,147" fill="#f4f4f4" stroke="#a8a8a8" stroke-width="1.1" stroke-linejoin="round" /><polygon points="99.5,131 105,143 99.5,143" fill="#f4f4f4" stroke="#a8a8a8" stroke-width="1.1" stroke-linejoin="round" /><line x1="87" y1="138" x2="97" y2="138" stroke="#b8b8b8" stroke-width="2.2" /><line x1="87" y1="138" x2="97" y2="138" stroke="#f4f4f4" stroke-width="0.9" /><path d="M96 135 L100 138 L96 141Z" fill="#f4f4f4" stroke="#a8a8a8" stroke-width="0.7"/><circle cx="912.7" cy="131.6" r="3" fill="#c8c8c8"/><path d="M913 132 Q918 120 922 121" fill="none" stroke="#a0a0a0" stroke-width="1.2" /><path d="M31.5 166.5 L31.5 178 L34.2 175.5 L36.5 180 L38.1 179.2 L35.9 174.8 L39.5 174.5Z" fill="#f4f4f4" stroke="#8a8a8a" stroke-width="0.9"/><line x1="14.5" y1="218.4" x2="22.5" y2="218.4" stroke="#000" stroke-width="1" /><line x1="18.5" y1="214.4" x2="18.5" y2="222.4" stroke="#000" stroke-width="1" /><circle cx="8.25" cy="241.4" r="1.7" fill="#f00"/><circle cx="8.25" cy="248.4" r="1.7" fill="#f00"/><circle cx="8.25" cy="255.4" r="1.7" fill="#f00"/><circle cx="8.25" cy="262.4" r="1.7" fill="#f00"/><circle cx="15.25" cy="241.4" r="1.7" fill="#f00"/><circle cx="15.25" cy="248.4" r="1.7" fill="#f00"/><circle cx="15.25" cy="255.4" r="1.7" fill="#f00"/><circle cx="15.25" cy="262.4" r="1.7" fill="#f00"/><circle cx="22.25" cy="241.4" r="1.7" fill="#f00"/><circle cx="22.25" cy="248.4" r="1.7" fill="#f00"/><circle cx="22.25" cy="255.4" r="1.7" fill="#f00"/><circle cx="22.25" cy="262.4" r="1.7" fill="#f00"/><circle cx="29.25" cy="241.4" r="1.7" fill="#f00"/><circle cx="29.25" cy="248.4" r="1.7" fill="#f00"/><circle cx="29.25" cy="255.4" r="1.7" fill="#f00"/><circle cx="29.25" cy="262.4" r="1.7" fill="#f00"/><line x1="8.3" y1="290.3" x2="29.4" y2="301.4" stroke="#222" stroke-width="1.2" /><path d="M16.7 280.5 Q18 292 29.4 293.2" fill="none" stroke="#222" stroke-width="1.2" /><circle cx="16.7" cy="280.5" r="2.1" fill="#f00"/><circle cx="8.3" cy="290.3" r="2.1" fill="#f00"/><circle cx="29.4" cy="293.2" r="2.1" fill="#f00"/><circle cx="29.4" cy="301.4" r="2.1" fill="#f00"/><polyline points="8.3,324.8 13.7,322 19,318.6 24.3,316.2 29.4,313" fill="none" stroke="#222" stroke-width="1.1" stroke-linejoin="round" /><polyline points="16.7,334.4 18,329.4 20.5,325.4 24.6,322.9 29.4,321.7" fill="none" stroke="#222" stroke-width="1.1" stroke-linejoin="round" /><circle cx="8.3" cy="324.8" r="1.8" fill="#f00"/><circle cx="13.7" cy="322" r="1.8" fill="#f00"/><circle cx="19" cy="318.6" r="1.8" fill="#f00"/><circle cx="24.3" cy="316.2" r="1.8" fill="#f00"/><circle cx="29.4" cy="313" r="1.8" fill="#f00"/><circle cx="16.7" cy="334.4" r="1.8" fill="#f00"/><circle cx="18" cy="329.4" r="1.8" fill="#f00"/><circle cx="20.5" cy="325.4" r="1.8" fill="#f00"/><circle cx="24.6" cy="322.9" r="1.8" fill="#f00"/><circle cx="29.4" cy="321.7" r="1.8" fill="#f00"/><line x1="10.7" y1="347.4" x2="20.4" y2="358.5" stroke="#222" stroke-width="1.2" /><line x1="29.6" y1="354.4" x2="20.4" y2="358.5" stroke="#222" stroke-width="1.2" /><path d="M20.4 358.5 Q17 362 16.7 367" fill="none" stroke="#222" stroke-width="1.2" /><path d="M17 354 A4 4 0 0 1 25 355" fill="none" stroke="#888" stroke-width="0.7" /><circle cx="20.4" cy="358.5" r="2.1" fill="#f00"/><circle cx="22.2" cy="387.2" r="7" fill="none" stroke="#222" stroke-width="1.2"/><line x1="16.7" y1="384.4" x2="8.9" y2="398.9" stroke="#222" stroke-width="1.2" /><circle cx="16.7" cy="384.4" r="2.1" fill="#f00"/><line x1="7.4" y1="423.3" x2="29.6" y2="412.2" stroke="#222" stroke-width="1.2" /><circle cx="18.5" cy="418" r="2.1" fill="#f00"/><path d="M16.3 433.5 Q17 422 29.6 420.5" fill="none" stroke="#222" stroke-width="1.2" /><circle cx="28.7" cy="433" r="2.1" fill="#f00"/><circle cx="18.9" cy="456.1" r="9.8" fill="none" stroke="#222" stroke-width="1.2"/><circle cx="18.9" cy="456.1" r="2" fill="#f00"/><circle cx="18.9" cy="446.3" r="2" fill="#f00"/><circle cx="18.9" cy="465.9" r="2" fill="#f00"/><circle cx="9.1" cy="456.1" r="2" fill="#f00"/><circle cx="28.7" cy="456.1" r="2" fill="#f00"/><line x1="7.9" y1="496" x2="30" y2="484.3" stroke="#222" stroke-width="1.2" /><circle cx="18.8" cy="489.8" r="2.1" fill="#f00"/><path d="M16.8 505.6 Q17 494 29.7 492.8" fill="none" stroke="#222" stroke-width="1.2" /><circle cx="20.2" cy="496" r="2.1" fill="#f00"/><rect x="7.5" y="518.5" width="23" height="19" fill="none" stroke="#444" stroke-width="1.3"/><line x1="9" y1="536" x2="29" y2="520" stroke="#666" stroke-width="0.8" stroke-dasharray="3 2"/><circle cx="18.8" cy="527.8" r="2.1" fill="#f00"/><line x1="9.25" y1="567.4" x2="29.8" y2="556.3" stroke="#222" stroke-width="1.2" /><circle cx="16.2" cy="563.9" r="2.1" fill="#f00"/><path d="M17.6 576.8 Q17 568 29.6 564.6" fill="none" stroke="#222" stroke-width="1.2" /><circle cx="19.9" cy="569" r="2.1" fill="#f00"/><line x1="7.4" y1="563.8" x2="12.5" y2="561" stroke="#111" stroke-width="1.6" /><path d="M11 559 L15 559.5 L13 563Z" fill="#111"/><line x1="22.6" y1="577" x2="23.2" y2="572.5" stroke="#111" stroke-width="1.6" /><path d="M21 573 L23.5 569.5 L25 573.5Z" fill="#111"/><circle cx="15.9" cy="596.4" r="2.1" fill="#f00"/><text x="6.5" y="613" font-family="Liberation Sans" font-size="10" fill="#111" font-weight="normal" text-anchor="start">1</text><text x="26.5" y="603" font-family="Liberation Sans" font-size="10" fill="#111" font-weight="normal" text-anchor="start">2</text><line x1="7" y1="598" x2="13" y2="595" stroke="#111" stroke-width="1.5" /><line x1="8" y1="601" x2="11" y2="599.5" stroke="#111" stroke-width="1.5" /><line x1="20" y1="594" x2="23" y2="592" stroke="#111" stroke-width="1.2" /><line x1="27" y1="590" x2="30" y2="588.5" stroke="#111" stroke-width="1.5" /><line x1="9.3" y1="640" x2="19.4" y2="643.4" stroke="#222" stroke-width="1.2" /><line x1="25.2" y1="641" x2="28.7" y2="630.4" stroke="#222" stroke-width="1.2" /><circle cx="24.7" cy="645.5" r="2.1" fill="#f00"/><text x="7.5" y="714.5" font-family="Liberation Sans" font-size="10" fill="#111" font-weight="normal" text-anchor="start">y</text><polyline points="15.5,705 15.5,720.7 31,720.7" fill="none" stroke="#444" stroke-width="1.4" stroke-linejoin="round" /><text x="25" y="729" font-family="Liberation Sans" font-size="10" fill="#111" font-weight="normal" text-anchor="start">x</text><circle cx="29" cy="706.7" r="1.9" fill="#f00"/><circle cx="10.7" cy="747.5" r="2.2" fill="#f00"/><line x1="13" y1="747.5" x2="27" y2="747.5" stroke="#333" stroke-width="1" stroke-dasharray="1 1.2"/><circle cx="27.2" cy="747.5" r="1.2" fill="#111"/><text x="25" y="757" font-family="Liberation Sans" font-size="9" fill="#111" font-weight="normal" text-anchor="start">2</text><line x1="10.7" y1="750" x2="10.7" y2="757" stroke="#888" stroke-width="0.8" stroke-dasharray="1 1.2"/></svg>
<div style="position:absolute;left:3px;top:662px;width:33px;height:33px;border:1px solid #8a8a8a;box-sizing:border-box;background:linear-gradient(#9a9a9a,#f0f0f0)"></div>
<div class="t" style="left:7.5px;top:672.42px;font-size:12.5px;line-height:12.5px;color:#000;font-weight:normal;letter-spacing:-0.3px">Auto</div>
<div style="position:absolute;left:37px;top:191px;width:885px;height:24px;background:linear-gradient(90deg,#f2f2f2,#e8e8e8)"></div>
<svg style="position:absolute;left:50px;top:194.5px" width="16" height="16" viewBox="0 0 16 16"><defs><linearGradient id="qg" x1="0" y1="0" x2="1" y2="1"><stop offset="0" stop-color="#b0bcdc"/><stop offset="0.45" stop-color="#4a5a9c"/><stop offset="1" stop-color="#1a2a70"/></linearGradient></defs><circle cx="7.0" cy="7.0" r="5.18" fill="#fafafa" stroke="url(#qg)" stroke-width="2.24"/><line x1="3.5" y1="7.700000000000001" x2="10.5" y2="6.3" stroke="#d0d0d0" stroke-width="0.6"/><line x1="7.28" y1="7.28" x2="12.32" y2="12.32" stroke="#f0a818" stroke-width="2.24"/><circle cx="12.88" cy="12.88" r="1.12" fill="#d86060"/></svg>
<div style="position:absolute;left:37px;top:215px;width:885px;height:542px;background:#000"></div>
<div style="position:absolute;left:891px;top:113px;width:16px;height:102px;background:linear-gradient(90deg,rgba(0,0,0,0.17),rgba(0,0,0,0.05) 50%,rgba(0,0,0,0))"></div>
<div style="position:absolute;left:94px;top:113px;width:15px;height:102px;background:linear-gradient(90deg,rgba(0,0,0,0),rgba(0,0,0,0.05) 50%,rgba(0,0,0,0.15))"></div>
<div style="position:absolute;left:109px;top:113px;width:782px;height:612px;background:rgba(0,0,0,0.56)"></div>
<div style="position:absolute;left:110px;top:114px;width:780px;height:30px;background:#fff"></div>
<div style="position:absolute;left:110px;top:144px;width:780px;height:580px;background:#f0f0f0"></div>
<div style="position:absolute;left:110px;top:723px;width:780px;height:1px;background:#fff"></div>
<div style="position:absolute;left:110px;top:144px;width:1px;height:580px;background:#fff"></div>
<svg style="position:absolute;left:119px;top:120.5px" width="16" height="16" viewBox="0 0 16 16"><defs><linearGradient id="qg" x1="0" y1="0" x2="1" y2="1"><stop offset="0" stop-color="#b0bcdc"/><stop offset="0.45" stop-color="#4a5a9c"/><stop offset="1" stop-color="#1a2a70"/></linearGradient></defs><circle cx="7.0" cy="7.0" r="5.18" fill="#fafafa" stroke="url(#qg)" stroke-width="2.24"/><line x1="3.5" y1="7.700000000000001" x2="10.5" y2="6.3" stroke="#d0d0d0" stroke-width="0.6"/><line x1="7.28" y1="7.28" x2="12.32" y2="12.32" stroke="#f0a818" stroke-width="2.24"/><circle cx="12.88" cy="12.88" r="1.12" fill="#d86060"/></svg>
<div class="t" style="left:139px;top:123.04px;font-size:12px;line-height:12px;color:#000;font-weight:normal;letter-spacing:-0.1px">Preferencias del dibujo</div>
<svg style="position:absolute;left:816px;top:120px" width="12" height="16" viewBox="0 0 12 16"><path d="M3.3 5.3 Q3.3 2.9 6 2.9 Q8.7 2.9 8.7 5.4 Q8.7 7.2 6.2 8.3 L6.2 10.3" fill="none" stroke="#000" stroke-width="1.3"/><rect x="5.4" y="11.6" width="1.6" height="1.6" fill="#000"/></svg>
<svg style="position:absolute;left:861px;top:122px" width="13" height="13" viewBox="0 0 13 13"><path d="M1.3 1.3L11.7 11.7M11.7 1.3L1.3 11.7" stroke="#000" stroke-width="1.2"/></svg>
<div style="position:absolute;left:121px;top:156px;width:155px;height:20px;border-top:1px solid #a0a0a0;border-left:1px solid #a0a0a0;border-right:1px solid #fff;border-bottom:1px solid #fff;box-sizing:border-box;background:#fff"></div>
<div style="position:absolute;left:122px;top:157px;width:153px;height:18px;border-top:1px solid #696969;border-left:1px solid #696969;border-right:1px solid #e3e3e3;border-bottom:1px solid #e3e3e3;box-sizing:border-box"></div>
<div class="t" style="left:124px;top:161.77px;font-size:11.5px;line-height:11.5px;color:#707070;font-weight:normal;-webkit-text-stroke:0">Filtro</div>
<svg style="position:absolute;left:284px;top:160px" width="12" height="12" viewBox="0 0 12 12"><rect x="0.5" y="0.5" width="9" height="9" fill="#e8e8e8" stroke="#a0a0a0"/><rect x="2.5" y="2.5" width="9" height="9" fill="#f8f8f8" stroke="#505050"/><line x1="4" y1="7" x2="10" y2="7" stroke="#000"/><line x1="7" y1="4" x2="7" y2="10" stroke="#000"/></svg>
<svg style="position:absolute;left:309px;top:160px" width="12" height="12" viewBox="0 0 12 12"><rect x="0.5" y="0.5" width="9" height="9" fill="#e8e8e8" stroke="#a0a0a0"/><rect x="2.5" y="2.5" width="9" height="9" fill="#f8f8f8" stroke="#505050"/><line x1="4" y1="7" x2="10" y2="7" stroke="#000"/></svg>
<div style="position:absolute;left:121px;top:183px;width:205px;height:499px;border-top:1px solid #a0a0a0;border-left:1px solid #a0a0a0;border-right:1px solid #fff;border-bottom:1px solid #fff;box-sizing:border-box;background:#fff"></div>
<div style="position:absolute;left:122px;top:184px;width:203px;height:497px;border-top:1px solid #696969;border-left:1px solid #696969;border-right:1px solid #e3e3e3;border-bottom:1px solid #e3e3e3;box-sizing:border-box"></div>
<div style="position:absolute;left:133px;top:196px;width:1px;height:127px;background:repeating-linear-gradient(180deg,#a0a0a0 0 1px,transparent 1px 2px)"></div>
<div style="position:absolute;left:153px;top:199px;width:1px;height:9px;background:repeating-linear-gradient(180deg,#a0a0a0 0 1px,transparent 1px 2px)"></div>
<div style="position:absolute;left:153px;top:229px;width:1px;height:9px;background:repeating-linear-gradient(180deg,#a0a0a0 0 1px,transparent 1px 2px)"></div>
<div style="position:absolute;left:153px;top:259px;width:1px;height:54px;background:repeating-linear-gradient(180deg,#a0a0a0 0 1px,transparent 1px 2px)"></div>
<div style="position:absolute;left:153px;top:334px;width:1px;height:54px;background:repeating-linear-gradient(180deg,#a0a0a0 0 1px,transparent 1px 2px)"></div>
<svg style="position:absolute;left:129px;top:189px" width="9" height="9" viewBox="0 0 9 9"><rect x="0.5" y="0.5" width="8" height="8" fill="#fff" stroke="#919191"/><line x1="2" y1="4.5" x2="7" y2="4.5" stroke="#000"/></svg>
<div style="position:absolute;left:139px;top:193px;width:4px;height:1px;background:repeating-linear-gradient(90deg,#a0a0a0 0 1px,transparent 1px 2px)"></div>
<div class="t" style="left:146px;top:186.84px;font-size:12px;line-height:12px;color:#000;font-weight:normal;">Dimensión</div>
<div style="position:absolute;left:163px;top:200px;width:147px;height:15px;background:#3399ff;outline:1px dotted #c08040;outline-offset:-1px"></div>
<div class="t" style="left:166px;top:201.84px;font-size:12px;line-height:12px;color:#fff;font-weight:normal;">Configuración dimensión</div>
<div style="position:absolute;left:154px;top:208px;width:9px;height:1px;background:repeating-linear-gradient(90deg,#a0a0a0 0 1px,transparent 1px 2px)"></div>
<svg style="position:absolute;left:129px;top:219px" width="9" height="9" viewBox="0 0 9 9"><rect x="0.5" y="0.5" width="8" height="8" fill="#fff" stroke="#919191"/><line x1="2" y1="4.5" x2="7" y2="4.5" stroke="#000"/></svg>
<div style="position:absolute;left:139px;top:223px;width:4px;height:1px;background:repeating-linear-gradient(90deg,#a0a0a0 0 1px,transparent 1px 2px)"></div>
<div class="t" style="left:146px;top:216.84px;font-size:12px;line-height:12px;color:#000;font-weight:normal;">Diseño</div>
<div class="t" style="left:166px;top:231.84px;font-size:12px;line-height:12px;color:#000;font-weight:normal;">Viewports</div>
<div style="position:absolute;left:154px;top:238px;width:9px;height:1px;background:repeating-linear-gradient(90deg,#a0a0a0 0 1px,transparent 1px 2px)"></div>
<svg style="position:absolute;left:129px;top:249px" width="9" height="9" viewBox="0 0 9 9"><rect x="0.5" y="0.5" width="8" height="8" fill="#fff" stroke="#919191"/><line x1="2" y1="4.5" x2="7" y2="4.5" stroke="#000"/></svg>
<div style="position:absolute;left:139px;top:253px;width:4px;height:1px;background:repeating-linear-gradient(90deg,#a0a0a0 0 1px,transparent 1px 2px)"></div>
<div class="t" style="left:146px;top:246.84px;font-size:12px;line-height:12px;color:#000;font-weight:normal;">General</div>
<div class="t" style="left:166px;top:261.84px;font-size:12px;line-height:12px;color:#000;font-weight:normal;">Rejilla</div>
<div style="position:absolute;left:154px;top:268px;width:9px;height:1px;background:repeating-linear-gradient(90deg,#a0a0a0 0 1px,transparent 1px 2px)"></div>
<div class="t" style="left:166px;top:276.84px;font-size:12px;line-height:12px;color:#000;font-weight:normal;">Tipo de línea</div>
<div style="position:absolute;left:154px;top:283px;width:9px;height:1px;background:repeating-linear-gradient(90deg,#a0a0a0 0 1px,transparent 1px 2px)"></div>
<div class="t" style="left:166px;top:291.84px;font-size:12px;line-height:12px;color:#000;font-weight:normal;">Unidad de dibujo</div>
<div style="position:absolute;left:154px;top:298px;width:9px;height:1px;background:repeating-linear-gradient(90deg,#a0a0a0 0 1px,transparent 1px 2px)"></div>
<div class="t" style="left:166px;top:306.84px;font-size:12px;line-height:12px;color:#000;font-weight:normal;">Visualización de los puntos</div>
<div style="position:absolute;left:154px;top:313px;width:9px;height:1px;background:repeating-linear-gradient(90deg,#a0a0a0 0 1px,transparent 1px 2px)"></div>
<svg style="position:absolute;left:129px;top:324px" width="9" height="9" viewBox="0 0 9 9"><rect x="0.5" y="0.5" width="8" height="8" fill="#fff" stroke="#919191"/><line x1="2" y1="4.5" x2="7" y2="4.5" stroke="#000"/></svg>
<div style="position:absolute;left:139px;top:328px;width:4px;height:1px;background:repeating-linear-gradient(90deg,#a0a0a0 0 1px,transparent 1px 2px)"></div>
<div class="t" style="left:146px;top:321.84px;font-size:12px;line-height:12px;color:#000;font-weight:normal;">Imprimiendo</div>
<div class="t" style="left:166px;top:336.84px;font-size:12px;line-height:12px;color:#000;font-weight:normal;">Colores</div>
<div style="position:absolute;left:154px;top:343px;width:9px;height:1px;background:repeating-linear-gradient(90deg,#a0a0a0 0 1px,transparent 1px 2px)"></div>
<div class="t" style="left:166px;top:351.84px;font-size:12px;line-height:12px;color:#000;font-weight:normal;">Números de página</div>
<div style="position:absolute;left:154px;top:358px;width:9px;height:1px;background:repeating-linear-gradient(90deg,#a0a0a0 0 1px,transparent 1px 2px)"></div>
<div class="t" style="left:166px;top:366.84px;font-size:12px;line-height:12px;color:#000;font-weight:normal;">Página</div>
<div style="position:absolute;left:154px;top:373px;width:9px;height:1px;background:repeating-linear-gradient(90deg,#a0a0a0 0 1px,transparent 1px 2px)"></div>
<div class="t" style="left:166px;top:381.84px;font-size:12px;line-height:12px;color:#000;font-weight:normal;">Varias páginas</div>
<div style="position:absolute;left:154px;top:388px;width:9px;height:1px;background:repeating-linear-gradient(90deg,#a0a0a0 0 1px,transparent 1px 2px)"></div>
<div class="t" style="left:330px;top:158.30px;font-size:17.6px;line-height:17.6px;color:#000;font-weight:bold;letter-spacing:-0.52px">Dimensión: Configuración dimensión</div>
<div style="position:absolute;left:330px;top:183px;width:549px;height:1px;background:#a0a0a0"></div>
<div style="position:absolute;left:330px;top:184px;width:549px;height:1px;background:#fff"></div>
<svg style="position:absolute;left:858px;top:157px" width="18" height="18" viewBox="0 0 18 18"><path d="M8 5.5 A4 4 0 1 1 9.5 13" fill="none" stroke="#dca050" stroke-width="3.6"/><path d="M8 5.5 A4 4 0 1 1 9.5 13" fill="none" stroke="#fad890" stroke-width="2"/><path d="M3.2 3.8 L9 4 L3.5 9.5Z" fill="#fad890" stroke="#dca050" stroke-width="0.9"/></svg>
<div style="position:absolute;left:330px;top:192px;width:549px;height:490px;border-top:1px solid #a0a0a0;border-left:1px solid #a0a0a0;border-right:1px solid #fff;border-bottom:1px solid #fff;box-sizing:border-box"></div>
<div style="position:absolute;left:331px;top:193px;width:547px;height:488px;border-top:1px solid #696969;border-left:1px solid #696969;border-right:1px solid #e3e3e3;border-bottom:1px solid #e3e3e3;box-sizing:border-box"></div>
<div style="position:absolute;left:860px;top:194px;width:17px;height:487px;background:#f0f0f0"></div>
<div style="position:absolute;left:860px;top:211px;width:17px;height:453px;background:repeating-conic-gradient(#f0f0f0 0 25%,#fff 0 50%) 0 0/2px 2px"></div>
<div style="position:absolute;left:860px;top:194px;width:17px;height:17px;background:#f0f0f0;border-top:1px solid #e3e3e3;border-left:1px solid #e3e3e3;border-right:1px solid #696969;border-bottom:1px solid #696969;box-sizing:border-box"></div>
<div style="position:absolute;left:861px;top:195px;width:15px;height:15px;border-top:1px solid #fff;border-left:1px solid #fff;border-right:1px solid #a0a0a0;border-bottom:1px solid #a0a0a0;box-sizing:border-box"></div>
<svg style="position:absolute;left:863.5px;top:199px" width="8" height="5" viewBox="0 0 8 5"><path d="M0 4.5 L4 0.5 L8 4.5Z" fill="#000"/></svg>
<div style="position:absolute;left:860px;top:211px;width:17px;height:347px;background:#f0f0f0;border-top:1px solid #e3e3e3;border-left:1px solid #e3e3e3;border-right:1px solid #696969;border-bottom:1px solid #696969;box-sizing:border-box"></div>
<div style="position:absolute;left:861px;top:212px;width:15px;height:345px;border-top:1px solid #fff;border-left:1px solid #fff;border-right:1px solid #a0a0a0;border-bottom:1px solid #a0a0a0;box-sizing:border-box"></div>
<div style="position:absolute;left:860px;top:664px;width:17px;height:17px;background:#f0f0f0;border-top:1px solid #e3e3e3;border-left:1px solid #e3e3e3;border-right:1px solid #696969;border-bottom:1px solid #696969;box-sizing:border-box"></div>
<div style="position:absolute;left:861px;top:665px;width:15px;height:15px;border-top:1px solid #fff;border-left:1px solid #fff;border-right:1px solid #a0a0a0;border-bottom:1px solid #a0a0a0;box-sizing:border-box"></div>
<svg style="position:absolute;left:863.5px;top:669px" width="8" height="5" viewBox="0 0 8 5"><path d="M0 0.5 L4 4.5 L8 0.5Z" fill="#000"/></svg>
<div style="position:absolute;left:341px;top:209px;width:509px;height:237px;border:1px solid #a0a0a0;box-sizing:border-box"></div>
<div style="position:absolute;left:342px;top:210px;width:507px;height:235px;border-top:1px solid #fff;border-left:1px solid #fff;box-sizing:border-box"></div>
<div style="position:absolute;left:341px;top:446px;width:510px;height:1px;background:#fff"></div>
<div style="position:absolute;left:850px;top:209px;width:1px;height:238px;background:#fff"></div>
<div class="t d" style="left:347px;top:204.89px;font-size:11px;line-height:11px;padding:0 4px 0 2px;background:#f0f0f0">Tamaños</div>
<div style="position:absolute;left:352px;top:229px;width:13px;height:13px;border-top:1px solid #a0a0a0;border-left:1px solid #a0a0a0;border-right:1px solid #fff;border-bottom:1px solid #fff;box-sizing:border-box;background:#fff"></div>
<div style="position:absolute;left:353px;top:230px;width:11px;height:11px;border-top:1px solid #696969;border-left:1px solid #696969;border-right:1px solid #e3e3e3;border-bottom:1px solid #e3e3e3;box-sizing:border-box"></div>
<div class="t d" style="left:369px;top:231.69px;font-size:11px;line-height:11px;color:#000;font-weight:normal;">Mantener proporciones</div>
<div class="t d" style="left:351px;top:256.69px;font-size:11px;line-height:11px;color:#000;font-weight:normal;">Altura del texto:</div>
<div style="position:absolute;left:543px;top:251px;width:249px;height:20px;border-top:1px solid #a0a0a0;border-left:1px solid #a0a0a0;border-right:1px solid #fff;border-bottom:1px solid #fff;box-sizing:border-box;background:#fff"></div>
<div style="position:absolute;left:544px;top:252px;width:247px;height:18px;border-top:1px solid #696969;border-left:1px solid #696969;border-right:1px solid #e3e3e3;border-bottom:1px solid #e3e3e3;box-sizing:border-box"></div>
<div class="t d" style="left:547px;top:256.69px;font-size:11px;line-height:11px;color:#000;font-weight:normal;">3.5</div>
<div class="t d" style="left:797px;top:256.69px;font-size:11px;line-height:11px;color:#000;font-weight:normal;letter-spacing:-0.3px">Milímetro</div>
<div class="t d" style="left:351px;top:282.69px;font-size:11px;line-height:11px;color:#000;font-weight:normal;">Extensión línea de referencia:</div>
<div style="position:absolute;left:543px;top:277px;width:249px;height:20px;border-top:1px solid #a0a0a0;border-left:1px solid #a0a0a0;border-right:1px solid #fff;border-bottom:1px solid #fff;box-sizing:border-box;background:#fff"></div>
<div style="position:absolute;left:544px;top:278px;width:247px;height:18px;border-top:1px solid #696969;border-left:1px solid #696969;border-right:1px solid #e3e3e3;border-bottom:1px solid #e3e3e3;box-sizing:border-box"></div>
<div class="t d" style="left:547px;top:282.69px;font-size:11px;line-height:11px;color:#000;font-weight:normal;">1.75</div>
<div class="t d" style="left:797px;top:282.69px;font-size:11px;line-height:11px;color:#000;font-weight:normal;letter-spacing:-0.3px">Milímetro</div>
<div class="t d" style="left:351px;top:308.69px;font-size:11px;line-height:11px;color:#000;font-weight:normal;">Desfase línea de referencia:</div>
<div style="position:absolute;left:543px;top:303px;width:249px;height:20px;border-top:1px solid #a0a0a0;border-left:1px solid #a0a0a0;border-right:1px solid #fff;border-bottom:1px solid #fff;box-sizing:border-box;background:#fff"></div>
<div style="position:absolute;left:544px;top:304px;width:247px;height:18px;border-top:1px solid #696969;border-left:1px solid #696969;border-right:1px solid #e3e3e3;border-bottom:1px solid #e3e3e3;box-sizing:border-box"></div>
<div class="t d" style="left:547px;top:308.69px;font-size:11px;line-height:11px;color:#000;font-weight:normal;">0.875</div>
<div class="t d" style="left:797px;top:308.69px;font-size:11px;line-height:11px;color:#000;font-weight:normal;letter-spacing:-0.3px">Milímetro</div>
<div class="t d" style="left:351px;top:334.69px;font-size:11px;line-height:11px;color:#000;font-weight:normal;">Espacio línea de dimensión:</div>
<div style="position:absolute;left:543px;top:329px;width:249px;height:20px;border-top:1px solid #a0a0a0;border-left:1px solid #a0a0a0;border-right:1px solid #fff;border-bottom:1px solid #fff;box-sizing:border-box;background:#fff"></div>
<div style="position:absolute;left:544px;top:330px;width:247px;height:18px;border-top:1px solid #696969;border-left:1px solid #696969;border-right:1px solid #e3e3e3;border-bottom:1px solid #e3e3e3;box-sizing:border-box"></div>
<div class="t d" style="left:547px;top:334.69px;font-size:11px;line-height:11px;color:#000;font-weight:normal;">0.875</div>
<div class="t d" style="left:797px;top:334.69px;font-size:11px;line-height:11px;color:#000;font-weight:normal;letter-spacing:-0.3px">Milímetro</div>
<div class="t d" style="left:351px;top:360.69px;font-size:11px;line-height:11px;color:#000;font-weight:normal;">Tamaño flecha:</div>
<div style="position:absolute;left:543px;top:355px;width:249px;height:20px;border-top:1px solid #a0a0a0;border-left:1px solid #a0a0a0;border-right:1px solid #fff;border-bottom:1px solid #fff;box-sizing:border-box;background:#fff"></div>
<div style="position:absolute;left:544px;top:356px;width:247px;height:18px;border-top:1px solid #696969;border-left:1px solid #696969;border-right:1px solid #e3e3e3;border-bottom:1px solid #e3e3e3;box-sizing:border-box"></div>
<div class="t d" style="left:547px;top:360.69px;font-size:11px;line-height:11px;color:#000;font-weight:normal;">3.5</div>
<div class="t d" style="left:797px;top:360.69px;font-size:11px;line-height:11px;color:#000;font-weight:normal;letter-spacing:-0.3px">Milímetro</div>
<div class="t d" style="left:351px;top:386.69px;font-size:11px;line-height:11px;color:#000;font-weight:normal;letter-spacing:-0.2px">Incremento de las líneas de dimensión:</div>
<div style="position:absolute;left:543px;top:381px;width:249px;height:20px;border-top:1px solid #a0a0a0;border-left:1px solid #a0a0a0;border-right:1px solid #fff;border-bottom:1px solid #fff;box-sizing:border-box;background:#fff"></div>
<div style="position:absolute;left:544px;top:382px;width:247px;height:18px;border-top:1px solid #696969;border-left:1px solid #696969;border-right:1px solid #e3e3e3;border-bottom:1px solid #e3e3e3;box-sizing:border-box"></div>
<div class="t d" style="left:547px;top:386.69px;font-size:11px;line-height:11px;color:#000;font-weight:normal;">0.38</div>
<div class="t d" style="left:797px;top:386.69px;font-size:11px;line-height:11px;color:#000;font-weight:normal;letter-spacing:-0.3px">Milímetro</div>
<div style="position:absolute;left:351px;top:407px;width:490px;height:1px;background:#a0a0a0"></div>
<div style="position:absolute;left:351px;top:408px;width:490px;height:1px;background:#fff"></div>
<div class="t d" style="left:351px;top:421.69px;font-size:11px;line-height:11px;color:#000;font-weight:normal;">Factor de escala:</div>
<div style="position:absolute;left:441px;top:417px;width:200px;height:19px;border-top:1px solid #a0a0a0;border-left:1px solid #a0a0a0;border-right:1px solid #fff;border-bottom:1px solid #fff;box-sizing:border-box;background:#fff"></div>
<div style="position:absolute;left:442px;top:418px;width:198px;height:17px;border-top:1px solid #696969;border-left:1px solid #696969;border-right:1px solid #e3e3e3;border-bottom:1px solid #e3e3e3;box-sizing:border-box"></div>
<div class="t d" style="left:445px;top:421.69px;font-size:11px;line-height:11px;color:#000;font-weight:normal;">1</div>
<div style="position:absolute;left:341px;top:459px;width:509px;height:39px;border:1px solid #a0a0a0;box-sizing:border-box"></div>
<div style="position:absolute;left:342px;top:460px;width:507px;height:37px;border-top:1px solid #fff;border-left:1px solid #fff;box-sizing:border-box"></div>
<div style="position:absolute;left:341px;top:498px;width:510px;height:1px;background:#fff"></div>
<div style="position:absolute;left:850px;top:459px;width:1px;height:40px;background:#fff"></div>
<div class="t d" style="left:347px;top:454.89px;font-size:11px;line-height:11px;padding:0 4px 0 2px;background:#f0f0f0">Estilo flecha</div>
<svg style="position:absolute;left:352px;top:477px" width="12" height="12" viewBox="0 0 12 12"><defs><linearGradient id="rg" x1="0" y1="0" x2="1" y2="1"><stop offset="0" stop-color="#707070"/><stop offset="0.5" stop-color="#a0a0a0"/><stop offset="0.75" stop-color="#fff"/></linearGradient></defs><circle cx="6" cy="6" r="5" fill="#fff" stroke="url(#rg)" stroke-width="1.6"/><circle cx="6" cy="6" r="2.1" fill="#000"/></svg>
<div class="t d" style="left:369px;top:478.69px;font-size:11px;line-height:11px;color:#000;font-weight:normal;">Flecha</div>
<svg style="position:absolute;left:411px;top:477px" width="12" height="12" viewBox="0 0 12 12"><circle cx="6" cy="6" r="5" fill="#fff" stroke="url(#rg)" stroke-width="1.6"/></svg>
<div class="t d" style="left:429px;top:478.69px;font-size:11px;line-height:11px;color:#000;font-weight:normal;">Marca arquitectónica</div>
<div style="position:absolute;left:341px;top:512px;width:509px;height:48px;border:1px solid #a0a0a0;box-sizing:border-box"></div>
<div style="position:absolute;left:342px;top:513px;width:507px;height:46px;border-top:1px solid #fff;border-left:1px solid #fff;box-sizing:border-box"></div>
<div style="position:absolute;left:341px;top:560px;width:510px;height:1px;background:#fff"></div>
<div style="position:absolute;left:850px;top:512px;width:1px;height:49px;background:#fff"></div>
<div class="t d" style="left:347px;top:507.89px;font-size:11px;line-height:11px;padding:0 4px 0 2px;background:#f0f0f0">Fuente</div>
<div class="t d" style="left:351px;top:535.69px;font-size:11px;line-height:11px;color:#000;font-weight:normal;">Fuente:</div>
<div style="position:absolute;left:599px;top:530px;width:240px;height:19px;border-top:1px solid #a0a0a0;border-left:1px solid #a0a0a0;border-right:1px solid #fff;border-bottom:1px solid #fff;box-sizing:border-box;background:#fff"></div>
<div style="position:absolute;left:600px;top:531px;width:238px;height:17px;border-top:1px solid #696969;border-left:1px solid #696969;border-right:1px solid #e3e3e3;border-bottom:1px solid #e3e3e3;box-sizing:border-box"></div>
<div class="t d" style="left:602px;top:535.69px;font-size:11px;line-height:11px;color:#000;font-weight:normal;">Helvetica-Bold</div>
<div style="position:absolute;left:821px;top:532px;width:16px;height:15px;background:#f0f0f0;border-top:1px solid #e3e3e3;border-left:1px solid #e3e3e3;border-right:1px solid #696969;border-bottom:1px solid #696969;box-sizing:border-box"></div>
<div style="position:absolute;left:822px;top:533px;width:14px;height:13px;border-top:1px solid #fff;border-left:1px solid #fff;border-right:1px solid #a0a0a0;border-bottom:1px solid #a0a0a0;box-sizing:border-box"></div>
<svg style="position:absolute;left:825px;top:537px" width="8" height="5" viewBox="0 0 8 5"><path d="M0 0.5 L4 4.5 L8 0.5Z" fill="#000"/></svg>
<div style="position:absolute;left:341px;top:573px;width:509px;height:47px;border:1px solid #a0a0a0;box-sizing:border-box"></div>
<div style="position:absolute;left:342px;top:574px;width:507px;height:45px;border-top:1px solid #fff;border-left:1px solid #fff;box-sizing:border-box"></div>
<div style="position:absolute;left:341px;top:620px;width:510px;height:1px;background:#fff"></div>
<div style="position:absolute;left:850px;top:573px;width:1px;height:48px;background:#fff"></div>
<div class="t d" style="left:347px;top:568.89px;font-size:11px;line-height:11px;padding:0 4px 0 2px;background:#f0f0f0">Formato numérico</div>
<div class="t d" style="left:351px;top:596.69px;font-size:11px;line-height:11px;color:#000;font-weight:normal;">Separador decimal:</div>
<div style="position:absolute;left:450px;top:591px;width:74px;height:19px;border-top:1px solid #a0a0a0;border-left:1px solid #a0a0a0;border-right:1px solid #fff;border-bottom:1px solid #fff;box-sizing:border-box;background:#fff"></div>
<div style="position:absolute;left:451px;top:592px;width:72px;height:17px;border-top:1px solid #696969;border-left:1px solid #696969;border-right:1px solid #e3e3e3;border-bottom:1px solid #e3e3e3;box-sizing:border-box"></div>
<div class="t d" style="left:453px;top:596.69px;font-size:11px;line-height:11px;color:#000;font-weight:normal;">. (Punto)</div>
<div style="position:absolute;left:507px;top:593px;width:16px;height:15px;background:#f0f0f0;border-top:1px solid #e3e3e3;border-left:1px solid #e3e3e3;border-right:1px solid #696969;border-bottom:1px solid #696969;box-sizing:border-box"></div>
<div style="position:absolute;left:508px;top:594px;width:14px;height:13px;border-top:1px solid #fff;border-left:1px solid #fff;border-right:1px solid #a0a0a0;border-bottom:1px solid #a0a0a0;box-sizing:border-box"></div>
<svg style="position:absolute;left:511px;top:598px" width="8" height="5" viewBox="0 0 8 5"><path d="M0 0.5 L4 4.5 L8 0.5Z" fill="#000"/></svg>
<div style="position:absolute;left:341px;top:634px;width:509px;height:60px;border:1px solid #a0a0a0;box-sizing:border-box"></div>
<div style="position:absolute;left:342px;top:635px;width:507px;height:58px;border-top:1px solid #fff;border-left:1px solid #fff;box-sizing:border-box"></div>
<div style="position:absolute;left:341px;top:694px;width:510px;height:1px;background:#fff"></div>
<div style="position:absolute;left:850px;top:634px;width:1px;height:61px;background:#fff"></div>
<div class="t d" style="left:347px;top:629.89px;font-size:11px;line-height:11px;padding:0 4px 0 2px;background:#f0f0f0">Formato de etiqueta</div>
<div style="position:absolute;left:352px;top:658px;width:239px;height:40px;border:1px solid #a0a0a0;box-sizing:border-box"></div>
<div style="position:absolute;left:353px;top:659px;width:237px;height:38px;border-top:1px solid #fff;border-left:1px solid #fff;box-sizing:border-box"></div>
<div style="position:absolute;left:352px;top:698px;width:240px;height:1px;background:#fff"></div>
<div style="position:absolute;left:591px;top:658px;width:1px;height:41px;background:#fff"></div>
<div class="t d" style="left:358px;top:653.89px;font-size:11px;line-height:11px;padding:0 4px 0 2px;background:#f0f0f0">Dimensión lineal</div>
<div style="position:absolute;left:476px;top:677px;width:105px;height:19px;border-top:1px solid #a0a0a0;border-left:1px solid #a0a0a0;border-right:1px solid #fff;border-bottom:1px solid #fff;box-sizing:border-box;background:#fff"></div>
<div style="position:absolute;left:477px;top:678px;width:103px;height:17px;border-top:1px solid #696969;border-left:1px solid #696969;border-right:1px solid #e3e3e3;border-bottom:1px solid #e3e3e3;box-sizing:border-box"></div>
<div style="position:absolute;left:599px;top:658px;width:239px;height:40px;border:1px solid #a0a0a0;box-sizing:border-box"></div>
<div style="position:absolute;left:600px;top:659px;width:237px;height:38px;border-top:1px solid #fff;border-left:1px solid #fff;box-sizing:border-box"></div>
<div style="position:absolute;left:599px;top:698px;width:240px;height:1px;background:#fff"></div>
<div style="position:absolute;left:838px;top:658px;width:1px;height:41px;background:#fff"></div>
<div class="t d" style="left:605px;top:653.89px;font-size:11px;line-height:11px;padding:0 4px 0 2px;background:#f0f0f0">Dimensión angular</div>
<div style="position:absolute;left:694px;top:677px;width:133px;height:19px;border-top:1px solid #a0a0a0;border-left:1px solid #a0a0a0;border-right:1px solid #fff;border-bottom:1px solid #fff;box-sizing:border-box;background:#fff"></div>
<div style="position:absolute;left:695px;top:678px;width:131px;height:17px;border-top:1px solid #696969;border-left:1px solid #696969;border-right:1px solid #e3e3e3;border-bottom:1px solid #e3e3e3;box-sizing:border-box"></div>
<div style="position:absolute;left:331px;top:681px;width:529px;height:43px;background:#f0f0f0"></div>
<div style="position:absolute;left:330px;top:681px;width:549px;height:1px;background:#fff"></div>
<div style="position:absolute;left:636px;top:688px;width:76px;height:24px;background:#f0f0f0;border-top:1px solid #fff;border-left:1px solid #fff;border-right:1px solid #696969;border-bottom:1px solid #696969;box-sizing:border-box"></div>
<div style="position:absolute;left:637px;top:689px;width:74px;height:22px;border-top:1px solid #e3e3e3;border-left:1px solid #e3e3e3;border-right:1px solid #a0a0a0;border-bottom:1px solid #a0a0a0;box-sizing:border-box"></div>
<div class="t" style="left:636px;top:695.69px;width:76px;text-align:center;font-size:11px;line-height:11px">Aceptar</div>
<div style="position:absolute;left:720px;top:688px;width:75px;height:24px;background:#f0f0f0;border-top:1px solid #fff;border-left:1px solid #fff;border-right:1px solid #696969;border-bottom:1px solid #696969;box-sizing:border-box"></div>
<div style="position:absolute;left:721px;top:689px;width:73px;height:22px;border-top:1px solid #e3e3e3;border-left:1px solid #e3e3e3;border-right:1px solid #a0a0a0;border-bottom:1px solid #a0a0a0;box-sizing:border-box"></div>
<div class="t" style="left:720px;top:695.69px;width:75px;text-align:center;font-size:11px;line-height:11px">Cancelar</div>
<div style="position:absolute;left:803px;top:688px;width:75px;height:24px;background:#f0f0f0;border-top:1px solid #fff;border-left:1px solid #fff;border-right:1px solid #696969;border-bottom:1px solid #696969;box-sizing:border-box"></div>
<div style="position:absolute;left:804px;top:689px;width:73px;height:22px;border-top:1px solid #e3e3e3;border-left:1px solid #e3e3e3;border-right:1px solid #a0a0a0;border-bottom:1px solid #a0a0a0;box-sizing:border-box"></div>
<div class="t" style="left:803px;top:695.69px;width:75px;text-align:center;font-size:11px;line-height:11px">Aplicar</div>
<svg style="position:absolute;left:58px;top:2px" width="24" height="24" viewBox="0 0 24 24"><defs><radialGradient id="g1" cx="0.45" cy="0.3" r="0.75"><stop offset="0" stop-color="#ffb080"/><stop offset="0.45" stop-color="#f05a28"/><stop offset="0.85" stop-color="#d83008"/><stop offset="1" stop-color="#a82000"/></radialGradient></defs><circle cx="12" cy="12" r="11.6" fill="url(#g1)"/><path d="M9.5 5 L14.5 5 L14.5 19.5 L9.5 19.5 L9.5 10.5 L5.5 12 L5.5 8.5 Z" fill="#fff" stroke="#000" stroke-width="1.8" stroke-linejoin="round"/></svg>
<svg style="position:absolute;left:262px;top:117px" width="24" height="24" viewBox="0 0 24 24"><defs><radialGradient id="g2" cx="0.45" cy="0.3" r="0.75"><stop offset="0" stop-color="#ffb080"/><stop offset="0.45" stop-color="#f05a28"/><stop offset="0.85" stop-color="#d83008"/><stop offset="1" stop-color="#a82000"/></radialGradient></defs><circle cx="12" cy="12" r="11.6" fill="url(#g2)"/><text x="12" y="19" text-anchor="middle" font-family="Liberation Sans" font-weight="bold" font-size="18.5" fill="#fff" stroke="#000" stroke-width="2.4" stroke-linejoin="round" paint-order="stroke">2</text></svg>
<svg style="position:absolute;left:307px;top:195px" width="24" height="24" viewBox="0 0 24 24"><defs><radialGradient id="g3" cx="0.45" cy="0.3" r="0.75"><stop offset="0" stop-color="#ffb080"/><stop offset="0.45" stop-color="#f05a28"/><stop offset="0.85" stop-color="#d83008"/><stop offset="1" stop-color="#a82000"/></radialGradient></defs><circle cx="12" cy="12" r="11.6" fill="url(#g3)"/><text x="12" y="19" text-anchor="middle" font-family="Liberation Sans" font-weight="bold" font-size="18.5" fill="#fff" stroke="#000" stroke-width="2.4" stroke-linejoin="round" paint-order="stroke">3</text></svg>
</body></html>
